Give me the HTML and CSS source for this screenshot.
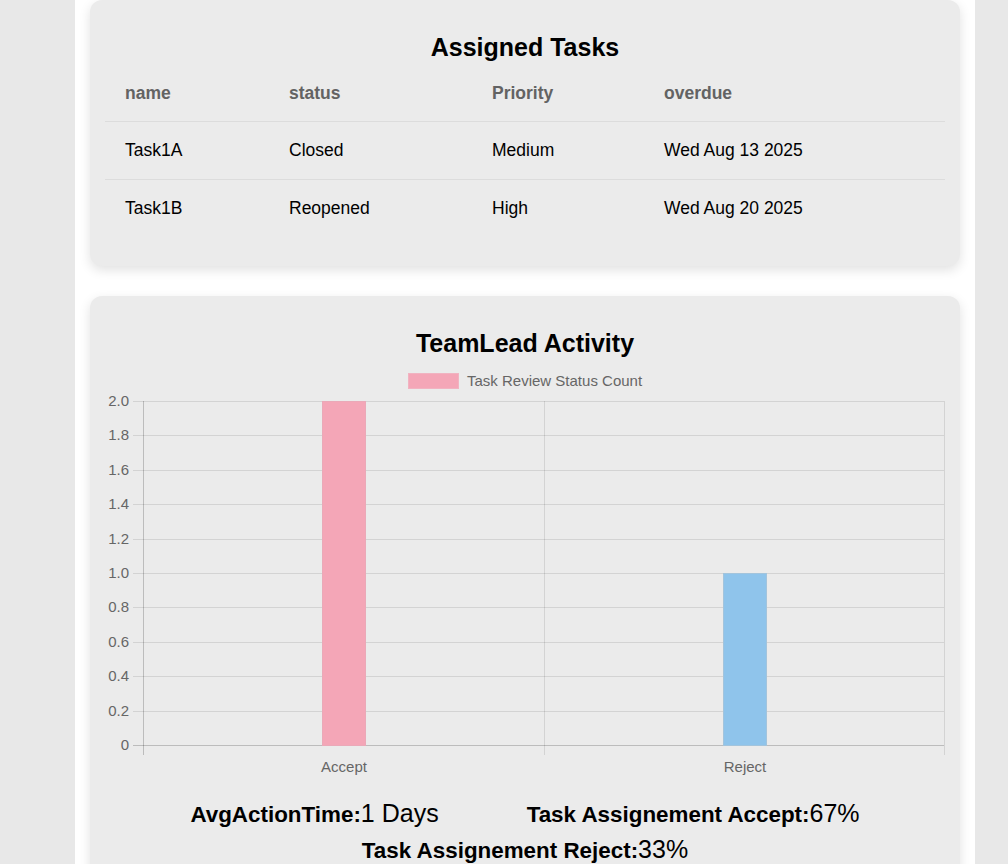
FILE: index.html
```html
<!DOCTYPE html>
<html lang="en">
<head>
<meta charset="utf-8">
<title>Dashboard</title>
<link rel="stylesheet" href="styles.css">
</head>
<body>
<div class="page">
  <section class="card tasks">
    <h2 class="card-title">Assigned Tasks</h2>
    <table class="task-table">
      <thead>
        <tr>
          <th class="c1">name</th>
          <th class="c2">status</th>
          <th class="c3">Priority</th>
          <th class="c4">overdue</th>
        </tr>
      </thead>
      <tbody>
        <tr>
          <td>Task1A</td>
          <td>Closed</td>
          <td>Medium</td>
          <td>Wed Aug 13 2025</td>
        </tr>
        <tr>
          <td>Task1B</td>
          <td>Reopened</td>
          <td>High</td>
          <td>Wed Aug 20 2025</td>
        </tr>
      </tbody>
    </table>
  </section>

  <section class="card activity">
    <h2 class="card-title">TeamLead Activity</h2>
    <svg class="chart" width="840" height="425" viewBox="0 0 840 425" xmlns="http://www.w3.org/2000/svg">
      <!-- legend -->
      <rect x="303.5" y="14.5" width="50" height="15" fill="#f4a6b7" stroke="#f1b3c1" stroke-width="1"/>
      <text x="362" y="27" class="lbl" text-anchor="start">Task Review Status Count</text>

      <!-- horizontal grid -->
      <g stroke="rgba(0,0,0,0.1)" stroke-width="1">
        <line x1="28" x2="839" y1="42.5" y2="42.5"/>
        <line x1="28" x2="839" y1="76.5" y2="76.5"/>
        <line x1="28" x2="839" y1="111.5" y2="111.5"/>
        <line x1="28" x2="839" y1="145.5" y2="145.5"/>
        <line x1="28" x2="839" y1="180.5" y2="180.5"/>
        <line x1="28" x2="839" y1="214.5" y2="214.5"/>
        <line x1="28" x2="839" y1="248.5" y2="248.5"/>
        <line x1="28" x2="839" y1="283.5" y2="283.5"/>
        <line x1="28" x2="839" y1="317.5" y2="317.5"/>
        <line x1="28" x2="839" y1="352.5" y2="352.5"/>
        <line x1="439.5" x2="439.5" y1="42" y2="396"/>
        <line x1="839.5" x2="839.5" y1="42" y2="396"/>
      </g>
      <!-- axes -->
      <g stroke="rgba(0,0,0,0.2)" stroke-width="1">
        <line x1="28" x2="839" y1="386.5" y2="386.5"/>
        <line x1="38.5" x2="38.5" y1="42" y2="396"/>
      </g>

      <!-- y labels -->
      <g class="lbl" text-anchor="end">
        <text x="24" y="47">2.0</text>
        <text x="24" y="81">1.8</text>
        <text x="24" y="116">1.6</text>
        <text x="24" y="150">1.4</text>
        <text x="24" y="185">1.2</text>
        <text x="24" y="219">1.0</text>
        <text x="24" y="253">0.8</text>
        <text x="24" y="288">0.6</text>
        <text x="24" y="322">0.4</text>
        <text x="24" y="357">0.2</text>
        <text x="24" y="391">0</text>
      </g>

      <!-- bars -->
      <rect x="217.5" y="42.5" width="43" height="344" fill="#f4a6b7" stroke="#eaa9b8" stroke-width="1"/>
      <rect x="618.5" y="214.5" width="43" height="172" fill="#8fc4eb" stroke="#a3c4dc" stroke-width="1"/>

      <!-- x labels -->
      <g class="lbl" text-anchor="middle">
        <text x="239" y="413">Accept</text>
        <text x="640" y="413">Reject</text>
      </g>
    </svg>

    <div class="stats">
      <div class="stat"><b>AvgActionTime:</b>1 Days</div>
      <div class="stat"><b>Task Assignement Accept:</b>67%</div>
      <div class="stat"><b>Task Assignement Reject:</b>33%</div>
    </div>
  </section>
</div>
</body>
</html>
```

FILE: styles.css
```css
html, body {
  margin: 0;
  padding: 0;
}

body {
  background: #e8e8e8;
  font-family: "Liberation Sans", Arial, sans-serif;
  color: #000;
}

.page {
  width: 900px;
  margin-left: 75px;
  min-height: 864px;
  background: #ffffff;
  padding: 0 15px 40px;
  box-sizing: border-box;
}

.card {
  background: #ebebeb;
  border-radius: 12px;
  box-shadow: 0 4px 12px rgba(0, 0, 0, 0.12);
  padding: 15px 15px 29px;
}

.activity {
  margin-top: 30px;
  padding-bottom: 30px;
}

.card-title {
  font-size: 25px;
  line-height: 28px;
  font-weight: bold;
  text-align: center;
  margin: 18px 0 2px;
}

.task-table {
  width: 100%;
  border-collapse: collapse;
  table-layout: fixed;
  font-size: 17.5px;
}

.task-table th,
.task-table td {
  line-height: 18px;
  text-align: left;
}

.task-table th {
  padding: 21px 20px 19px;
  color: #636363;
  font-weight: bold;
}

.task-table td {
  padding: 19px 20px 20px;
}

.task-table tbody tr {
  border-top: 1px solid #dcdcdc;
}

.c1 { width: 124px; }
.c2 { width: 163px; }
.c3 { width: 132px; }

.chart {
  display: block;
}

.chart .lbl,
.chart text {
  font-family: "Liberation Sans", Arial, sans-serif;
  font-size: 15px;
  fill: #666666;
}

.stats {
  display: flex;
  flex-wrap: wrap;
  justify-content: center;
  column-gap: 88px;
  padding-top: 12px;
}

.stat {
  font-size: 25px;
  line-height: 35px;
  white-space: nowrap;
}

.stat b {
  font-size: 22.4px;
}
```
